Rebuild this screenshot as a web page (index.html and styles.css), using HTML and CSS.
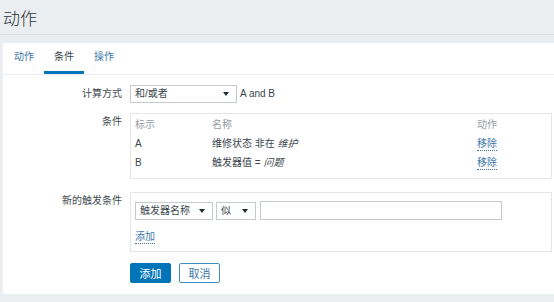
FILE: index.html
```html
<!DOCTYPE html>
<html lang="zh-CN">
<head>
  <meta charset="UTF-8" />
  <meta name="viewport" content="width=device-width, initial-scale=1" />
  <title>动作</title>
  <link rel="stylesheet" href="styles.css">
</head>
<body>

  <header class="page-header">
    <h1>动作</h1>
  </header>

  <div class="card">
    <ul class="tabs">
      <li>动作</li>
      <li class="active">条件</li>
      <li>操作</li>
    </ul>

    <form class="form">
      <div class="form-row">
        <label class="form-label">计算方式</label>
        <div class="form-field inline">
          <div class="select calc"><span>和/或者</span><span class="arrow"></span></div>
          <span class="formula">A and B</span>
        </div>
      </div>

      <div class="form-row">
        <label class="form-label">条件</label>
        <div class="form-field box cond-table">
          <div class="cond-row head">
            <span>标示</span>
            <span>名称</span>
            <span>动作</span>
          </div>
          <div class="cond-row">
            <span>A</span>
            <span>维修状态 非在 <em>维护</em></span>
            <span><a class="link">移除</a></span>
          </div>
          <div class="cond-row">
            <span>B</span>
            <span>触发器值 = <em>问题</em></span>
            <span><a class="link">移除</a></span>
          </div>
        </div>
      </div>

      <div class="form-row new-cond">
        <label class="form-label">新的触发条件</label>
        <div class="form-field box new-box">
          <div class="inline">
            <div class="select trigger"><span>触发器名称</span><span class="arrow"></span></div>
            <div class="select like"><span>似</span><span class="arrow"></span></div>
            <input class="text-input" type="text" />
          </div>
          <a class="link add-link">添加</a>
        </div>
      </div>

      <div class="form-row buttons">
        <span class="form-label"></span>
        <div class="form-field inline">
          <button type="button" class="btn btn-primary">添加</button>
          <button type="button" class="btn btn-alt">取消</button>
        </div>
      </div>
    </form>
  </div>

</body>
</html>
```

FILE: styles.css
```css
* { box-sizing: border-box; }
body {
  margin: 0;
  background: #ebeef0;
  font-family: 'Liberation Sans', 'Noto Sans CJK SC', sans-serif;
  font-size: 10px;
  color: #3b464c;
  overflow: hidden;
}

.page-header {
  padding: 10px 3px 4px;
  border-bottom: 1px solid #dde1e4;
  margin-bottom: 8px;
}
.page-header h1 {
  margin: 0;
  font-size: 17px;
  line-height: 20px;
  font-weight: 300;
  color: #2a3439;
}

.card {
  margin-left: 3px;
  background: #fff;
  padding-bottom: 11px;
}

.tabs {
  list-style: none;
  margin: 0;
  padding: 0 0 0 1px;
  display: flex;
  border-bottom: 1px solid #ebeef0;
}
.tabs li {
  padding: 7px 10px;
  line-height: 14px;
  color: #3d76ab;
  border-bottom: 3px solid transparent;
}
.tabs li.active {
  color: #3b464c;
  border-bottom-color: #0275b8;
}

.form {
  padding: 10px 2px 0 0;
}
.form-row {
  display: flex;
  gap: 8px;
  margin-bottom: 10px;
}
.form-row.new-cond { margin-top: 13px; }
.form-row.buttons { margin: 11px 0 0; }

.form-label {
  flex: 0 0 119px;
  text-align: right;
  padding-top: 2px;
  line-height: 14px;
  color: #444c50;
}
.form-field {
  flex: 1;
}
.inline {
  display: flex;
  align-items: center;
}

.select {
  height: 18px;
  border: 1px solid #c5cacd;
  padding: 0 7px 0 4px;
  display: flex;
  align-items: center;
  justify-content: space-between;
  line-height: 16px;
  background: #fff;
}
.select .arrow {
  width: 0;
  height: 0;
  border-left: 3px solid transparent;
  border-right: 3px solid transparent;
  border-top: 4px solid #1f2c33;
}
.select.calc { width: 107px; }
.select.trigger { width: 78px; }
.select.like { width: 40px; margin-left: 3px; }

.formula {
  margin-left: 3px;
  line-height: 16px;
}

.box {
  border: 1px solid #e4e7ea;
  padding: 1px 4px 6px;
}

.cond-row {
  display: grid;
  grid-template-columns: 77px 265px 1fr;
  line-height: 19px;
}
.cond-row.head { color: #959ca1; }
.cond-row em { font-style: italic; }

.link {
  color: #3d76ab;
  border-bottom: 1px dotted #3d76ab;
  line-height: 13px;
  display: inline-block;
  cursor: pointer;
}

.new-box {
  padding: 8px 4px 7px;
}
.text-input {
  width: 242px;
  height: 19px;
  margin-left: 4px;
  border: 1px solid #c5cacd;
  padding: 0 4px;
  font: inherit;
}
.add-link {
  margin-top: 10px;
}

.btn {
  width: 41px;
  height: 20px;
  padding: 0;
  font: inherit;
  font-size: 11px;
  border-radius: 2px;
  cursor: pointer;
}
.btn-primary {
  background: #0275b8;
  border: 1px solid #0275b8;
  color: #fff;
}
.btn-alt {
  margin-left: 8px;
  background: #fff;
  border: 1px solid #3d8fc4;
  color: #3d76ab;
}
```
